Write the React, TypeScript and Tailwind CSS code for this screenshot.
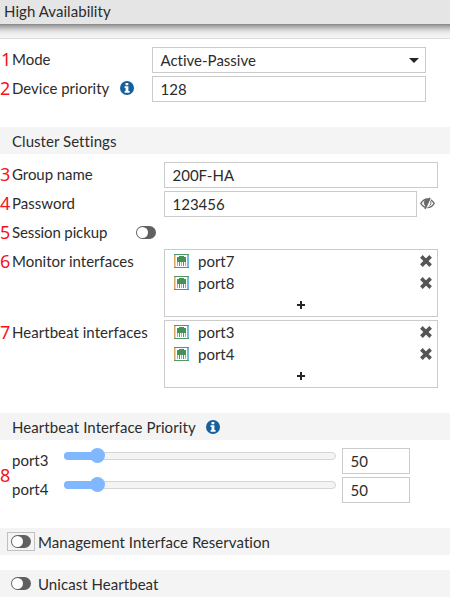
import type { ReactNode } from "react";

const textFont =
  "font-['Lato',sans-serif] text-[15px] leading-[20px] text-[#2c2c2c] [font-variant-ligatures:none]";

function InfoIcon({ className = "" }: { className?: string }) {
  return (
    <svg className={`shrink-0 ${className}`} width="14" height="14" viewBox="0 0 14 14">
      <circle cx="7" cy="7" r="7" fill="#17609b" />
      <path d="M5.500 2h2.800v2.200H5.500zM4.600 5.300h3.800v4.800h1.200v1.700H4.600v-1.700h1V7h-1z" fill="#fff" />
    </svg>
  );
}

function Marker({ n, className = "" }: { n: number; className?: string }) {
  return (
    <span className={`w-[12px] shrink-0 font-['Noto_Sans',sans-serif] text-[18px] leading-[20px] tracking-[-1px] text-[#f5131f] ${className}`}>
      {n}
    </span>
  );
}

function Row({ n, label, labelWidth, children, extra, height = "h-[26px]", tracking = "", markerPad = "" }: {
  n: number;
  label: string;
  labelWidth: string;
  children?: ReactNode;
  extra?: ReactNode;
  height?: string;
  tracking?: string;
  markerPad?: string;
}) {
  return (
    <div className={`flex items-start ${height}`}>
      <div className={`flex h-[26px] shrink-0 items-center whitespace-nowrap ${labelWidth}`}>
        <Marker n={n} className={`-mt-[3px] ${markerPad}`} />
        <span className={`-mt-[3px] ${tracking}`}>{label}</span>
        {extra}
      </div>
      {children}
    </div>
  );
}

function Field({ value, width, children }: { value: string; width: string; children?: ReactNode }) {
  return (
    <div className={`flex h-[26px] items-center justify-between border border-[#cbcbcb] bg-white pl-[7.5px] ${width}`}>
      <span>{value}</span>
      {children}
    </div>
  );
}

function Section({ children, className = "" }: { children: ReactNode; className?: string }) {
  return <div className={`flex h-[27px] items-center bg-[#f4f4f4] tracking-[0.05px] ${className}`}>{children}</div>;
}

function Toggle({ className = "" }: { className?: string }) {
  return (
    <span className={`flex h-[13px] w-[20px] shrink-0 items-center rounded-full bg-[#606060] pl-[1px] ${className}`}>
      <span className="h-[11px] w-[11px] rounded-full bg-white" />
    </span>
  );
}

function PortIcon() {
  return (
    <svg className="-mt-[2px]" width="15" height="14" viewBox="0 0 15 14" shapeRendering="crispEdges">
      <rect width="15" height="14" fill="#519867" />
      <rect x="1" y="1" width="13" height="12" fill="#fff" />
      <path d="M0 1h1v12H0z" fill="#d9a566" />
      <path d="M1 1h1v12H1z" fill="#efd0a0" />
      <path d="M13 1h2v12h-2z" fill="#72bce8" />
      <path d="M5 2h5v1h2v5H3V3h2z" fill="#459154" />
      <path d="M3 8h1v4H3zM7 8h1v4H7z" fill="#d9a566" />
      <path d="M5 8h1v4H5zM9 8h1v4H9z" fill="#519867" />
      <path d="M11 8h1v4h-1z" fill="#72bce8" />
    </svg>
  );
}

function CloseIcon() {
  return (
    <svg className="-mt-[2px]" width="12" height="12" viewBox="0 0 12 12">
      <path d="M2.700 2.700 9.300 9.300M9.300 2.700 2.700 9.300" stroke="#555" strokeWidth="3.700" strokeLinecap="square" />
    </svg>
  );
}

function PortList({ ports }: { ports: string[] }) {
  return (
    <div className="flex h-[68px] w-[274px] flex-col border border-[#cbcbcb] bg-white pt-[1px]">
      {ports.map((port) => (
        <div key={port} className="flex h-[22px] items-center pl-[9px] pr-[5px]">
          <PortIcon />
          <span className="-mt-[2px] ml-[9px] flex-1">{port}</span>
          <CloseIcon />
        </div>
      ))}
      <svg className="ml-[131px] mt-[5px]" width="10" height="10" viewBox="0 0 10 10">
        <path d="M4 1h2v3h3v2h-3v3h-2v-3h-3v-2h3z" fill="#252525" />
      </svg>
    </div>
  );
}

function EyeSlash() {
  return (
    <svg className="ml-[3px] mt-[6px]" width="15" height="13" viewBox="0 0 15 13" fill="none" stroke="#686868">
      <path d="M.8 6.4C2.5 3.7 4.8 2 7.5 2s5 1.700 6.700 4.400C12.500 9.100 10.200 10.700 7.500 10.700S2.500 9.100.8 6.400Z" strokeWidth="1.300" />
      <path d="M8.300 2.200C5.700 2.100 4.300 3.600 4.300 5.700c0 1.400.5 2.500 1.500 3.200Z" fill="#686868" />
      <path d="M10.400 4c1 1.800.6 3.700-1.100 4.900" />
      <path d="M11.200 1 6.200 12" stroke="#fff" strokeWidth="1.200" />
      <path d="M10 .8 5 11.800" strokeWidth="1.700" />
    </svg>
  );
}

function PriorityRow({ port }: { port: string }) {
  return (
    <div className="flex h-[26px] items-start">
      <span className="w-[52px] pt-[2px]">{port}</span>
      <div className="relative mt-[4px] h-[8px] w-[272px] rounded-full border border-[#d5d5d5] bg-[#f4f4f4]">
        <div className="absolute -left-px -top-px h-[8px] w-[34px] rounded-l-full bg-[#80b7ff]" />
        <div className="absolute left-[25px] top-[-5px] h-[15px] w-[15px] rounded-full bg-[#80b7ff]" />
      </div>
      <div className="ml-[6px]">
        <Field value="50" width="w-[68px]" />
      </div>
    </div>
  );
}

export default function App() {
  return (
    <div className={`h-[598px] w-[450px] overflow-hidden bg-white ${textFont}`}>
      <header className="h-[24px] bg-[#e5e5e5] pl-[4px] pt-[1px] tracking-[0.05px]">High Availability</header>
      <div className="h-[15px] border-b border-[#dedede] bg-[linear-gradient(to_bottom,#858585_0px,#a5a5a5_2px,#cbcbcb_5px,#e7e7e7_8px,#f4f4f4_12px)]" />

      <div className="mt-[8px] flex flex-col gap-[3px]">
        <Row n={1} label="Mode" labelWidth="w-[152px]" markerPad="pl-[1px]">
          <Field value="Active-Passive" width="w-[274px]">
            <svg className="mr-[6px]" width="10" height="5" viewBox="0 0 10 5">
              <path d="M0 0h10L5 5z" fill="#252525" />
            </svg>
          </Field>
        </Row>
        <Row
          n={2}
          label="Device priority"
          labelWidth="w-[152px]"
          extra={<InfoIcon className="ml-[11px] -mt-[2px]" />}
        >
          <Field value="128" width="w-[274px]" />
        </Row>
      </div>

      <Section className="mt-[25px] pl-[12px]">Cluster Settings</Section>

      <div className="mt-[8px] flex flex-col gap-[3px]">
        <Row n={3} label="Group name" labelWidth="w-[164px]" tracking="tracking-[-0.05px]">
          <Field value="200F-HA" width="w-[274px]" />
        </Row>
        <Row n={4} label="Password" labelWidth="w-[164px]">
          <Field value="123456" width="w-[253px]" />
          <EyeSlash />
        </Row>
        <Row
          n={5}
          label="Session pickup"
          labelWidth="w-[164px]"
          tracking="tracking-[-0.12px]"
          extra={<Toggle className="ml-auto mr-[8px] -mt-[1px]" />}
        />
        <Row n={6} label="Monitor interfaces" labelWidth="w-[164px]" height="h-[68px]">
          <PortList ports={["port7", "port8"]} />
        </Row>
        <Row n={7} label="Heartbeat interfaces" labelWidth="w-[164px]" height="h-[68px]" tracking="tracking-[0.04px]">
          <PortList ports={["port3", "port4"]} />
        </Row>
      </div>

      <Section className="mt-[25px] pl-[12px]">
        <span className="tracking-[0.08px]">Heartbeat Interface Priority</span>
        <InfoIcon className="ml-[10px]" />
      </Section>

      <div className="mt-[8px] flex items-center">
        <Marker n={8} className="-mt-[2px]" />
        <div className="flex flex-col gap-[3px]">
          <PriorityRow port="port3" />
          <PriorityRow port="port4" />
        </div>
      </div>

      <Section className="mt-[25px] pl-[7px]">
        <span className="flex h-[19px] w-[28px] items-center justify-center border border-[#c0c0c0]">
          <Toggle />
        </span>
        <span className="ml-[3px]">Management Interface Reservation</span>
      </Section>
      <Section className="mt-[15px] pl-[11px]">
        <Toggle />
        <span className="ml-[7px]">Unicast Heartbeat</span>
      </Section>
    </div>
  );
}
